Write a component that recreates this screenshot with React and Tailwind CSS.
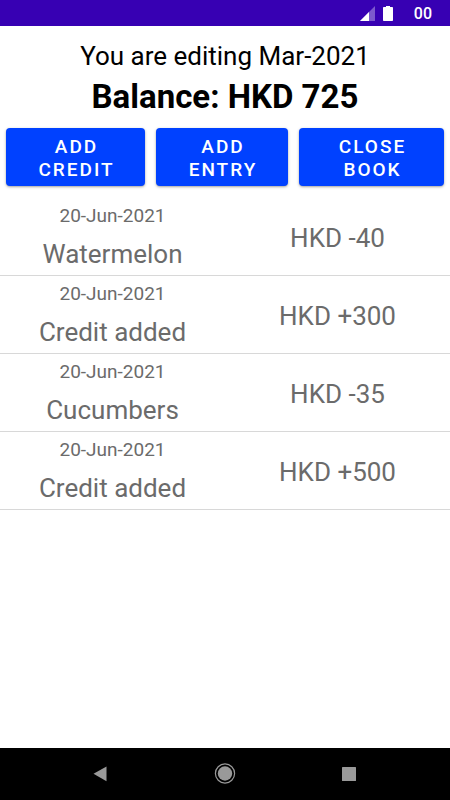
const entries = [
  { id: 1, date: "20-Jun-2021", name: "Watermelon", amount: "-40" },
  { id: 2, date: "20-Jun-2021", name: "Credit added", amount: "+300" },
  { id: 3, date: "20-Jun-2021", name: "Cucumbers", amount: "-35" },
  { id: 4, date: "20-Jun-2021", name: "Credit added", amount: "+500" },
];

const StatusBar = () => {
  return (
    <div className="flex h-[26px] items-center justify-end bg-[#3700b3] pt-[2px] pr-[18px] text-white">
      <svg className="mr-[7px] h-4 w-4" viewBox="0 0 16 16" fill="currentColor">
        <path d="M16 0v15H1z" opacity="0.35" />
        <path d="M10 6v9H1z" />
      </svg>
      <svg className="mr-5 h-4 w-3" viewBox="0 0 12 16" fill="currentColor">
        <path d="M4 0h4v1h2.200a.8.800 0 0 1 .8.800v12.400a.8.800 0 0 1-.8.800H1.800a.8.800 0 0 1-.8-.8V1.800A.8.800 0 0 1 1.800 1H4z" />
      </svg>
      <span className="text-base font-medium">00</span>
    </div>
  );
};

const ActionButton = ({ children }) => {
  return (
    <button
      type="button"
      className="h-[58px] rounded bg-[#0041ff] pt-[2px] pr-6 pl-[26px] text-[19px] leading-[23px] font-medium tracking-[2px] text-white uppercase shadow-sm shadow-black/30"
    >
      {children}
    </button>
  );
};

const EntryRow = ({ entry }) => {
  return (
    <li className="grid h-[78px] grid-cols-2 items-center border-b border-[#d8d8d8] pt-[2px] text-center text-[#6b6b6b]">
      <div>
        <p className="mb-2 text-[19px] leading-[26px]">{entry.date}</p>
        <p className="text-[26px] leading-[35px]">{entry.name}</p>
      </div>
      <p className="pt-[2px] text-[26px] leading-[35px]">HKD {entry.amount}</p>
    </li>
  );
};

const NavBar = () => {
  return (
    <nav className="grid h-[52px] grid-cols-[1fr_50px_1fr] items-center bg-black text-[#999999]">
      <button type="button" aria-label="Back" className="mr-[93px] justify-self-end">
        <svg className="h-4 w-[14px]" viewBox="0 0 14 16" fill="currentColor">
          <path d="M13.500 .5v14.700L.5 7.800z" />
        </svg>
      </button>
      <button type="button" aria-label="Home" className="justify-self-center">
        <svg className="h-[22px] w-[22px]" viewBox="0 0 22 22" fill="currentColor">
          <circle cx="11" cy="10.500" r="7.200" />
          <circle cx="11" cy="10.500" r="9.600" fill="none" stroke="currentColor" strokeWidth="1.200" />
        </svg>
      </button>
      <button type="button" aria-label="Recent apps" className="ml-[92px] justify-self-start">
        <svg className="h-[14px] w-[14px]" viewBox="0 0 14 14" fill="currentColor">
          <rect width="14" height="14" rx="0.500" />
        </svg>
      </button>
    </nav>
  );
};

const App = () => {
  return (
    <div className="flex min-h-screen flex-col bg-white font-['Roboto',sans-serif]">
      <StatusBar />

      <main className="flex-1">
        <header className="pt-3 text-center text-black">
          <p className="text-[26px] leading-[36px]">You are editing Mar-2021</p>
          <h1 className="text-[33px] leading-[46px] font-bold">Balance: HKD 725</h1>
        </header>

        <div className="grid grid-cols-[139fr_132fr_145fr] gap-[11px] px-[6px] pt-2 pb-3">
          <ActionButton>Add Credit</ActionButton>
          <ActionButton>Add Entry</ActionButton>
          <ActionButton>Close Book</ActionButton>
        </div>

        <ul>
          {entries.map((entry) => (
            <EntryRow key={entry.id} entry={entry} />
          ))}
        </ul>
      </main>

      <NavBar />
    </div>
  );
};

export default App;
